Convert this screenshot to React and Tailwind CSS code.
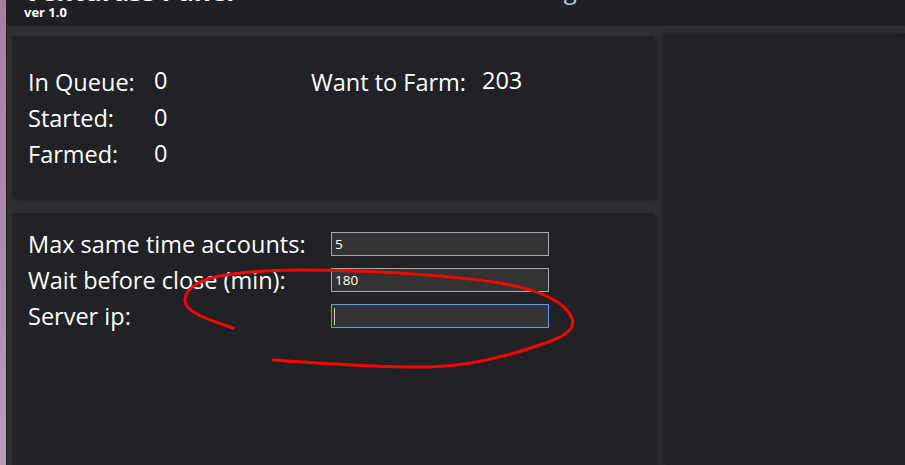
import React from "react";

const font = { fontFamily: '"Open Sans", "Noto Sans", sans-serif' };

function StatRow({ label, value, right, rightValue, h = "h-[36px]" }) {
  return (
    <div className={`grid ${h} grid-cols-[126px_157px_171px_auto] items-center`}>
      <span>{label}</span>
      <span className="-mt-[3px]">{value}</span>
      <span>{right}</span>
      <span className="-mt-[3px]">{rightValue}</span>
    </div>
  );
}

function Field({ label, value, focused }) {
  return (
    <div className="flex h-[36px] items-center">
      <span className="w-[303px] shrink-0">{label}</span>
      <div
        className={
          focused
            ? "flex h-[24px] w-[218px] items-center border border-[#569de5] bg-[#333333] px-[3px] text-[13.5px] text-white"
            : "flex h-[24px] w-[218px] items-center border border-[#a8a8a8] bg-[#333333] px-[3px] text-[13.5px] text-white"
        }
      >
        {focused ? <span className="ml-[-1px] h-[17px] w-px bg-[#d0d0d0]" /> : value}
      </div>
    </div>
  );
}

export default function App() {
  return (
    <div
      className="relative flex h-[465px] w-[905px] overflow-hidden bg-[#2e2f34] text-[23.5px] text-white"
      style={font}
    >
      {/* desktop wallpaper peeking on the left */}
      <div className="w-[6px] shrink-0 bg-gradient-to-b from-[#a3819e] via-[#ab8ca6] to-[#b99cb9]" />

      <div className="flex min-w-0 flex-1 flex-col border-l border-[#241f25]">
        {/* header, scrolled so only the bottom of the title shows */}
        <div className="flex h-[26px] shrink-0 overflow-hidden bg-[#1f2023]">
          <div className="ml-[17px] mt-[-22px] flex flex-col">
            <span className="text-[26px] leading-[26px] font-bold">Venturass Panel</span>
            <span className="mt-[1px] text-[13px] leading-[14px] font-bold">ver 1.0</span>
          </div>
          <span className="ml-[265px] mt-[-25px] text-[24px] leading-[30px] text-[#9fd3f0]">Settings</span>
        </div>

        <div className="flex flex-1 gap-[12px] pl-[5px]">
          <div className="flex w-[642px] shrink-0 flex-col gap-[16px] pt-[10px]">
            <div className="h-[161px] bg-[#212226] pl-[16px] pt-[27px] leading-[36px] shadow-[3px_3px_4px_rgba(0,0,0,0.35)]">
              <StatRow label="In Queue:" value="0" right="Want to Farm:" rightValue="203" h="h-[37px]" />
              <StatRow label="Started:" value="0" />
              <StatRow label="Farmed:" value="0" h="h-[35px]" />
            </div>

            <div className="flex-1 bg-[#212226] pl-[16px] pt-[13px] leading-[36px] shadow-[3px_3px_4px_rgba(0,0,0,0.35)]">
              <Field label="Max same time accounts:" value="5" />
              <Field label="Wait before close (min):" value="180" />
              <Field label="Server ip:" focused />
            </div>
          </div>

          <div className="mt-[7px] flex-1 bg-[#212226] shadow-[-3px_0_4px_rgba(0,0,0,0.35)]" />
        </div>
      </div>

      {/* red hand-drawn annotation */}
      <svg className="pointer-events-none absolute left-0 top-0" width="905" height="465" viewBox="0 0 905 465">
        <path
          d="M233 328 C210 320 186 313 185 301 C184 290 198 281 215 277 C240 272 270 270 300 270 C360 270 440 274 500 283 C540 290 565 302 572 318 C576 330 562 337 548 342 C510 356 470 366 430 367 C380 368 320 363 273 360"
          fill="none"
          stroke="#ff0000"
          strokeWidth="3"
          strokeLinecap="round"
        />
      </svg>
    </div>
  );
}
